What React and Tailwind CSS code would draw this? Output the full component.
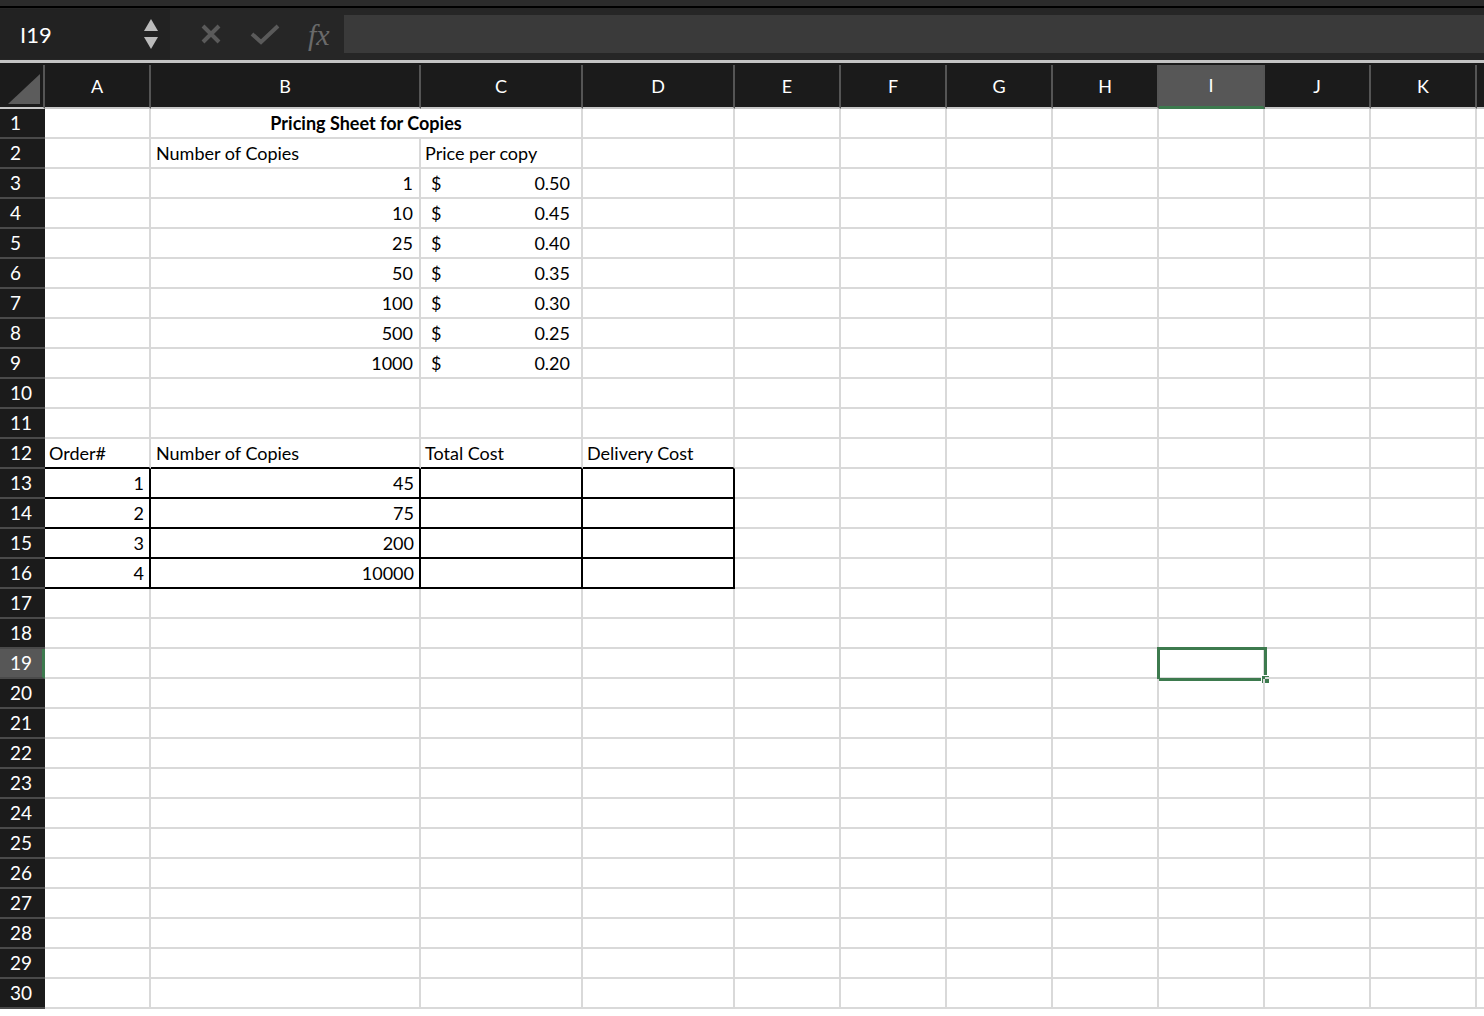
import React from "react";

const cols = ["A","B","C","D","E","F","G","H","I","J","K"];
const prices = [[1,"0.50"],[10,"0.45"],[25,"0.40"],[50,"0.35"],[100,"0.30"],[500,"0.25"],[1000,"0.20"]];
const orders = [[1,45],[2,75],[3,200],[4,10000]];

function content(r, c) {
  if (r === 2 && c === 1) return <span className="pl-[5px]">Number of Copies</span>;
  if (r === 2 && c === 2) return <span className="pl-[4px]">Price per copy</span>;
  if (r >= 3 && r <= 9) {
    const p = prices[r - 3];
    if (c === 1) return <span className="ml-auto pr-[6px]">{p[0]}</span>;
    if (c === 2) return <div className="flex w-full px-[10px] pr-[11px]"><span>$</span><span className="ml-auto">{p[1]}</span></div>;
  }
  if (r === 12) {
    if (c === 0) return <span className="pl-[4px]">Order#</span>;
    if (c === 1) return <span className="pl-[5px]">Number of Copies</span>;
    if (c === 2) return <span className="pl-[4px]">Total Cost</span>;
    if (c === 3) return <span className="pl-[4px]">Delivery Cost</span>;
  }
  if (r >= 13 && r <= 16) {
    const o = orders[r - 13];
    if (c === 0) return <span className="ml-auto pr-[5px]">{o[0]}</span>;
    if (c === 1) return <span className="ml-auto pr-[5px]">{o[1]}</span>;
  }
  return null;
}

export default function App() {
  const rows = Array.from({ length: 30 }, (_, i) => i + 1);
  return (
    <div className="w-[1484px] h-[1016px] overflow-hidden bg-white" style={{ fontFamily: "Lato, 'Open Sans', sans-serif" }}>
      <div className="h-[6px] bg-[#2b2b2b]" />
      <div className="h-[2px] bg-black" />
      <div className="h-[52px] bg-[#262626] flex items-center">
        <div className="w-[170px] h-[50px] bg-[#222] flex items-center pl-[20px] text-white text-[22px]">
          <span>I19</span>
          <div className="ml-auto mr-[12px] flex flex-col gap-[6px] items-center">
            <svg width="14" height="12" viewBox="0 0 14 12"><path d="M7 0L14 12H0Z" fill="#bbb" /></svg>
            <svg width="14" height="12" viewBox="0 0 14 12"><path d="M0 0H14L7 12Z" fill="#bbb" /></svg>
          </div>
        </div>
        <div className="flex items-center gap-[28px] ml-[30px]">
          <svg width="22" height="20" viewBox="0 0 22 20"><path d="M3 2L19 18M19 2L3 18" stroke="#5a5a5a" strokeWidth="4" /></svg>
          <svg width="30" height="22" viewBox="0 0 30 22"><path d="M2 11L11 19L28 3" stroke="#5a5a5a" strokeWidth="4" fill="none" /></svg>
          <span className="text-[30px] italic text-[#6a6a6a]" style={{ fontFamily: "'Liberation Serif', serif" }}>fx</span>
        </div>
        <div className="ml-[14px] flex-1 h-[38px] bg-[#3a3a3a]" />
      </div>
      <div className="h-[3px] bg-[#c4c4c4]" />
      <div className="h-[2px] bg-[#1b1b1b]" />
      <div className="grid grid-cols-[45px_106px_270px_162px_152px_106px_106px_106px_106px_106px_106px_106px_1fr] grid-rows-[44px] auto-rows-[30px] text-[18px] text-black">
        <div className="bg-[#1b1b1b] border-r-2 border-b-2 border-r-[#555] border-b-[#c8c8c8] relative">
          <svg className="absolute right-[3px] bottom-[3px]" width="32" height="30" viewBox="0 0 32 30"><path d="M32 0V30H0Z" fill="#5c5c5c" /></svg>
        </div>
        {cols.map((c) => (
          <div key={c} className={`flex items-center justify-center text-white text-[18px] border-r-2 border-r-[#555] ${c === "I" ? "bg-[#575757] border-b-[3px] border-b-[#3d7a4e]" : "bg-[#1b1b1b] border-b-2 border-b-[#c8c8c8]"}`}>{c}</div>
        ))}
        <div className="bg-[#1b1b1b] border-b-2 border-b-[#c8c8c8]" />
        {rows.map((r) => (
          <React.Fragment key={r}>
            <div className={`flex items-center pl-[10px] text-white text-[19px] border-b-2 border-b-[#4a4a4a] ${r === 19 ? "bg-[#575757] border-r-[3px] border-r-[#3d7a4e]" : "bg-[#1b1b1b]"}`}>{r}</div>
            {r === 1 ? (
              <>
                <div className="border-r-2 border-b-2 border-[#d9d9d9]" />
                <div className="col-span-2 flex items-center justify-center font-bold border-r-2 border-b-2 border-[#d9d9d9]">Pricing Sheet for Copies</div>
                {cols.slice(3).map((c) => <div key={c} className="border-r-2 border-b-2 border-[#d9d9d9]" />)}
              </>
            ) : (
              cols.map((c, ci) => {
                const tbl = ci <= 3;
                const bBlack = tbl && r >= 12 && r <= 16;
                const rBlack = tbl && r >= 13 && r <= 16;
                return (
                  <div key={c} className={`relative flex items-center whitespace-nowrap border-r-2 border-b-2 ${rBlack ? "border-r-black" : "border-r-[#d9d9d9]"} ${bBlack ? "border-b-black" : "border-b-[#d9d9d9]"}`}>
                    {content(r, ci)}
                    {r === 19 && c === "I" && (
                      <div className="absolute -left-[2px] -top-[2px] w-[110px] h-[34px] border-[3px] border-[#3d7a4e]">
                        <div className="absolute -right-[6px] -bottom-[6px] w-[9px] h-[9px] bg-[#3d7a4e] border border-white" />
                      </div>
                    )}
                  </div>
                );
              })
            )}
            <div className="border-b-2 border-b-[#d9d9d9]" />
          </React.Fragment>
        ))}
      </div>
    </div>
  );
}
